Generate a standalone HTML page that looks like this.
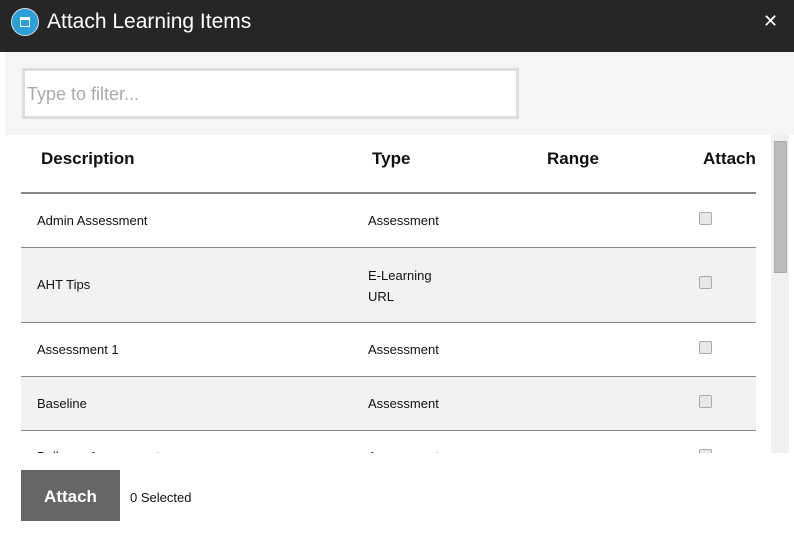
<!DOCTYPE html><html><head><style>
body{margin:0;width:794px;height:540px;background:#fff;font-family:"Segoe UI","Liberation Sans",sans-serif;position:relative;overflow:hidden}
.hd{position:absolute;left:0;top:0;width:794px;height:52px;background:#262626;color:#fff}
.ic{position:absolute;left:11px;top:8px;width:28px;height:28px;border-radius:50%;background:#2a9fd8;border:1px solid #ddd;box-sizing:border-box}
.ic i{position:absolute;left:8px;top:8px;width:10px;height:10px;border:1.5px solid #fff;box-sizing:border-box;border-top-width:3px}
.tt{position:absolute;left:47px;top:10px;font-size:21px}
.x{position:absolute;left:763px;top:11px;font-size:18px}
.fl{position:absolute;left:5px;top:52px;width:789px;height:83px;background:#f4f5f5}
.in{position:absolute;left:22px;top:68px;width:497px;height:51px;border:3px solid #ddd;box-sizing:border-box;background:#fff;color:#aaa;font-size:18px;padding:13px 2px}
.tb{position:absolute;left:5px;top:135px;width:766px;height:318px;background:#fff;overflow:hidden}
.sb{position:absolute;left:771px;top:135px;width:18px;height:318px;background:#f0f0f0}
.th{position:absolute;left:774px;top:141px;width:13px;height:132px;background:#bbb;border:1px solid #aaa;box-sizing:border-box}
.t{position:absolute;font-size:13px;color:#111}
.h{position:absolute;font-size:17px;font-weight:bold;color:#111;top:14px}
.r{position:absolute;left:16px;width:735px;border-bottom:1px solid #888}
.cb{position:absolute;left:694px;width:11px;height:11px;border:1px solid #aaa;border-radius:2px;background:#e8e8e8}
.bt{position:absolute;left:21px;top:470px;width:99px;height:51px;background:#666;color:#fff;font-weight:bold;font-size:17px;text-align:center;line-height:53px}
</style></head><body>
<div class="hd"><div class="ic"><i></i></div><div class="tt">Attach Learning Items</div><div class="x">✕</div></div>
<div class="fl"></div>
<div class="in">Type to filter...</div>
<div class="tb">
<div class="h" style="left:36px">Description</div><div class="h" style="left:367px">Type</div><div class="h" style="left:542px">Range</div><div class="h" style="left:698px">Attach</div>
<div class="r" style="top:57px;border-bottom:2px solid #888;height:0"></div>
<div class="r" style="top:59px;height:53px;background:#fff"></div>
<div class="r" style="top:113px;height:74px;background:#f2f2f2"></div>
<div class="r" style="top:188px;height:53px;background:#fff"></div>
<div class="r" style="top:242px;height:53px;background:#f2f2f2"></div>
<div class="t" style="left:32px;top:78px">Admin Assessment</div><div class="t" style="left:363px;top:78px">Assessment</div><div class="cb" style="top:77px"></div>
<div class="t" style="left:32px;top:142px">AHT Tips</div><div class="t" style="left:363px;top:130px;line-height:21px">E-Learning<br>URL</div><div class="cb" style="top:141px"></div>
<div class="t" style="left:32px;top:207px">Assessment 1</div><div class="t" style="left:363px;top:207px">Assessment</div><div class="cb" style="top:206px"></div>
<div class="t" style="left:32px;top:261px">Baseline</div><div class="t" style="left:363px;top:261px">Assessment</div><div class="cb" style="top:260px"></div>
<div class="t" style="left:32px;top:314px">Bullseye Assessment</div><div class="t" style="left:363px;top:314px">Assessment</div><div class="cb" style="top:314px"></div>
</div>
<div class="sb"></div><div class="th"></div>
<div class="bt">Attach</div>
<div class="t" style="left:130px;top:490px">0 Selected</div>
</body></html>
